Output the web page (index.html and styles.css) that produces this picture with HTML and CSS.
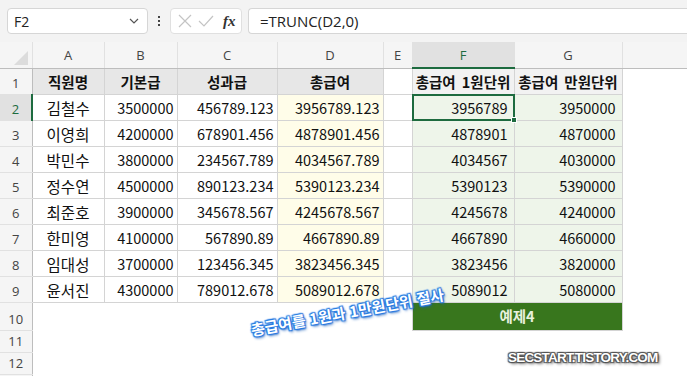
FILE: index.html
```html
<!DOCTYPE html>
<html lang="ko">
<head>
    <meta charset="UTF-8">
    <title>TRUNC 예제4</title>
    <link rel="stylesheet" href="styles.css">
</head>
<body>
    <div class="app">
        <div class="formula-bar">
            <div class="name-box">
                <span>F2</span>
                <svg class="chev" width="10" height="6" viewBox="0 0 10 6"><path d="M1 1l4 4 4-4" fill="none" stroke="#555" stroke-width="1.2"/></svg>
            </div>
            <div class="dots"><i></i><i></i><i></i></div>
            <div class="fx-box">
                <svg width="14" height="14" viewBox="0 0 14 14"><path d="M1 1l12 12M13 1L1 13" stroke="#c4c4c4" stroke-width="1.2"/></svg>
                <svg width="16" height="14" viewBox="0 0 16 14"><path d="M1 7l5 5L15 2" fill="none" stroke="#c4c4c4" stroke-width="1.2"/></svg>
                <span class="fx">fx</span>
            </div>
            <div class="formula">=TRUNC(D2,0)</div>
        </div>

        <table class="sheet">
            <colgroup>
                <col class="c-row"><col class="c-a"><col class="c-b"><col class="c-c"><col class="c-d"><col class="c-e"><col class="c-f"><col class="c-g"><col>
            </colgroup>
            <tr class="col-head">
                <th class="corner"><span class="tri"></span></th>
                <th>A</th><th>B</th><th>C</th><th>D</th><th>E</th><th class="active">F</th><th>G</th><th class="rest"></th>
            </tr>
            <tr class="r-head">
                <th class="rn">1</th>
                <td class="hd">직원명</td><td class="hd">기본급</td><td class="hd">성과급</td><td class="hd">총급여</td>
                <td></td>
                <td class="hd2">총급여 1원단위</td><td class="hd2">총급여 만원단위</td><td class="blank"></td>
            </tr>
            <tr>
                <th class="rn active">2</th>
                <td class="name">김철수</td><td>3500000</td><td>456789.123</td><td class="tot">3956789.123</td>
                <td></td>
                <td class="res sel">3956789<span class="cursor"><span class="handle"></span></span></td><td class="res">3950000</td><td class="blank"></td>
            </tr>
            <tr>
                <th class="rn">3</th>
                <td class="name">이영희</td><td>4200000</td><td>678901.456</td><td class="tot">4878901.456</td>
                <td></td>
                <td class="res">4878901</td><td class="res">4870000</td><td class="blank"></td>
            </tr>
            <tr>
                <th class="rn">4</th>
                <td class="name">박민수</td><td>3800000</td><td>234567.789</td><td class="tot">4034567.789</td>
                <td></td>
                <td class="res">4034567</td><td class="res">4030000</td><td class="blank"></td>
            </tr>
            <tr>
                <th class="rn">5</th>
                <td class="name">정수연</td><td>4500000</td><td>890123.234</td><td class="tot">5390123.234</td>
                <td></td>
                <td class="res">5390123</td><td class="res">5390000</td><td class="blank"></td>
            </tr>
            <tr>
                <th class="rn">6</th>
                <td class="name">최준호</td><td>3900000</td><td>345678.567</td><td class="tot">4245678.567</td>
                <td></td>
                <td class="res">4245678</td><td class="res">4240000</td><td class="blank"></td>
            </tr>
            <tr>
                <th class="rn">7</th>
                <td class="name">한미영</td><td>4100000</td><td>567890.89</td><td class="tot">4667890.89</td>
                <td></td>
                <td class="res">4667890</td><td class="res">4660000</td><td class="blank"></td>
            </tr>
            <tr>
                <th class="rn">8</th>
                <td class="name">임대성</td><td>3700000</td><td>123456.345</td><td class="tot">3823456.345</td>
                <td></td>
                <td class="res">3823456</td><td class="res">3820000</td><td class="blank"></td>
            </tr>
            <tr>
                <th class="rn">9</th>
                <td class="name">윤서진</td><td>4300000</td><td>789012.678</td><td class="tot">5089012.678</td>
                <td></td>
                <td class="res">5089012</td><td class="res">5080000</td><td class="blank"></td>
            </tr>
            <tr class="r10">
                <th class="rn">10</th>
                <td class="empty" colspan="5"></td>
                <td class="label" colspan="2">예제4</td><td class="blank"></td>
            </tr>
            <tr class="r-small">
                <th class="rn">11</th>
                <td class="empty" colspan="8"></td>
            </tr>
            <tr class="r-small">
                <th class="rn">12</th>
                <td class="empty" colspan="8"></td>
            </tr>
            <tr class="r-small">
                <th class="rn"></th>
                <td class="empty" colspan="8"></td>
            </tr>
        </table>

        <div class="note">총급여를 1원과 1만원단위 절사</div>
        <div class="mark">SECSTART.TISTORY.COM</div>
    </div>
</body>
</html>
```

FILE: styles.css
```css
*{
    margin: 0;
    padding: 0;
    box-sizing: border-box;
}
body{
    width: 687px;
    height: 376px;
    overflow: hidden;
    background: #ffffff;
    font-family: "Noto Sans CJK KR", "Noto Sans", sans-serif;
}
.app{
    position: relative;
    width: 687px;
    height: 376px;
    overflow: hidden;
}
.formula-bar{
    height: 42px;
    background: #f3f3f3;
    display: flex;
    align-items: center;
    padding: 0 0 0 7px;
}
.name-box{
    width: 141px;
    height: 26px;
    background: #fff;
    border: 1px solid #d6d6d6;
    border-radius: 4px;
    display: flex;
    align-items: center;
    justify-content: space-between;
    padding: 0 8px 0 6px;
    font-family: "Open Sans", "Noto Sans", sans-serif;
    font-size: 14px;
    color: #222;
}
.dots{
    width: 22px;
    display: flex;
    flex-direction: column;
    align-items: center;
    gap: 2px;
}
.dots i{
    width: 2px;
    height: 2px;
    background: #444;
}
.fx-box{
    width: 72px;
    height: 26px;
    background: #fff;
    border: 1px solid #e0e0e0;
    border-radius: 4px;
    display: flex;
    align-items: center;
    gap: 6px;
    padding-left: 7px;
}
.fx{
    font-family: "Liberation Serif", serif;
    font-style: italic;
    font-weight: bold;
    font-size: 15px;
    color: #333;
    margin-left: 3px;
}
.formula{
    flex: 1;
    height: 26px;
    margin-left: 6px;
    background: #fff;
    border: 1px solid #d6d6d6;
    border-right: none;
    border-radius: 4px 0 0 4px;
    padding-left: 11px;
    font-family: "Open Sans", "Noto Sans", sans-serif;
    font-size: 15px;
    line-height: 24px;
    color: #222;
}

.sheet{
    border-collapse: collapse;
    table-layout: fixed;
    width: 687px;
    font-size: 14.5px;
    color: #111;
}
.c-row{ width: 32px; }
.c-a{ width: 72px; }
.c-b{ width: 73px; }
.c-c{ width: 100px; }
.c-d{ width: 106px; }
.c-e{ width: 29px; }
.c-f{ width: 102px; }
.c-g{ width: 108px; }

.col-head th{
    height: 21px;
    background: #f5f5f5;
    border-right: 1px solid #e1e1e1;
    border-bottom: 1px solid #bdbdbd;
    font-family: "Open Sans", "Noto Sans", sans-serif;
    font-weight: normal;
    font-size: 13px;
    color: #444;
    line-height: 18px;
}
.col-head th.active{
    background: #e1e1e1;
    color: #1d6b3f;
    border-bottom: 2px solid #1d6b3f;
}
.col-head th.rest{
    border-right: none;
}
.corner{
    position: relative;
}
.tri{
    position: absolute;
    right: 4px;
    bottom: 3px;
    width: 0;
    height: 0;
    border-left: 14px solid transparent;
    border-bottom: 14px solid #dcdcdc;
}
.rn{
    background: #f5f5f5;
    border-right: 1px solid #bdbdbd;
    border-bottom: 1px solid #e1e1e1;
    font-family: "Open Sans", "Noto Sans", sans-serif;
    font-weight: normal;
    font-size: 13px;
    color: #444;
    vertical-align: bottom;
    padding-bottom: 2px;
}
.rn.active{
    background: #e1e1e1;
    color: #1d6b3f;
    border-right: 2px solid #1d6b3f;
}

tr{
    height: 26px;
}
td{
    border: 1px solid #d4d4d4;
    text-align: right;
    padding: 0 3px 1px 0;
    vertical-align: bottom;
    line-height: 22px;
    white-space: nowrap;
    overflow: visible;
}
td.name{
    text-align: center;
    padding-right: 0;
    font-size: 15.5px;
}
td.hd{
    background: #e7e7e7;
    text-align: center;
    font-weight: bold;
    padding-right: 0;
}
td.hd2{
    background: #f2f2f2;
    text-align: center;
    font-weight: bold;
    padding-right: 0;
    word-spacing: 2px;
}
td.tot{
    background: #fffde9;
}
td.res{
    background: #eef5ea;
    padding-right: 6px;
}
td.sel{
    position: relative;
}
.cursor{
    position: absolute;
    left: -1px;
    top: -1px;
    right: -1px;
    bottom: -1px;
    border: 2px solid #1d6b3f;
}
.handle{
    position: absolute;
    right: -4px;
    bottom: -4px;
    width: 6px;
    height: 6px;
    background: #1d6b3f;
    border: 1px solid #fff;
}
td.blank,
td.empty{
    border: none;
    background: #fff;
}
.r-head td.blank{
    border-left: 1px solid #d4d4d4;
}
tr.r10{
    height: 28px;
}
td.label{
    background: #38761d;
    color: #e8f1df;
    font-weight: bold;
    text-align: center;
    padding-right: 0;
    vertical-align: middle;
    border: 1px solid #d4d4d4;
}
tr.r-small{
    height: 22px;
}

.note{
    position: absolute;
    left: 251px;
    top: 319px;
    font-size: 15px;
    font-weight: bold;
    color: #fff;
    transform: rotate(-10.5deg);
    transform-origin: left center;
    text-shadow: 0 0 2px #2b7be0, 0 0 2px #2b7be0, 1px 1px 1px #2b7be0, -1px -1px 1px #2b7be0, 1px -1px 1px #2b7be0, -1px 1px 1px #2b7be0, 1px 2px 3px #1a5fb8;
}
.mark{
    position: absolute;
    left: 508px;
    top: 350px;
    font-family: "Liberation Sans", Arial, sans-serif;
    font-size: 13.5px;
    font-weight: bold;
    letter-spacing: -0.8px;
    color: #fff;
    text-shadow: 0 0 1px #444, 1px 1px 1px #555, -1px -1px 1px #555, 1px -1px 1px #555, -1px 1px 1px #555, 2px 2px 3px #666;
}
```
